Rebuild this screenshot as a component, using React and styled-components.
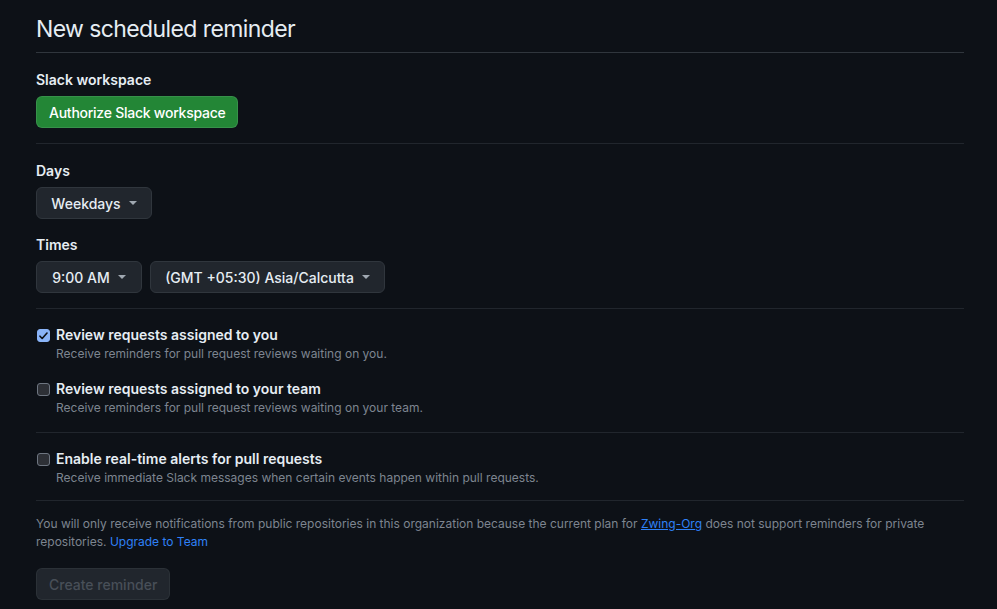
import styled, { createGlobalStyle } from "styled-components";

const GlobalStyle = createGlobalStyle`
  html, body {
    margin: 0;
    padding: 0;
    background: #0d1117;
  }
  body {
    font-family: Inter, "Liberation Sans", sans-serif;
    color: #e6edf3;
  }
`;

const CaretIcon = () => (
  <svg width="8" height="4" viewBox="0 0 8 4" aria-hidden="true">
    <path d="M0 0h8L4 4z" fill="currentColor" />
  </svg>
);

const CheckMark = () => (
  <svg width="9" height="8" viewBox="0 0 9 8" aria-hidden="true">
    <path
      d="M1 4.2l2.2 2.3L8 1"
      fill="none"
      stroke="#0d1117"
      strokeWidth="1.6"
      strokeLinecap="round"
      strokeLinejoin="round"
    />
  </svg>
);

const Option = ({ checked, title, note }) => (
  <OptionRow>
    <Box $checked={checked}>{checked && <CheckMark />}</Box>
    <OptionText>
      <OptionTitle>{title}</OptionTitle>
      <OptionNote>{note}</OptionNote>
    </OptionText>
  </OptionRow>
);

const App = () => {
  return (
    <>
      <GlobalStyle />
      <Page>
        <Header>
          <Title>New scheduled reminder</Title>
        </Header>

        <Section>
          <Label>Slack workspace</Label>
          <PrimaryButton>Authorize Slack workspace</PrimaryButton>
        </Section>

        <Section>
          <Label>Days</Label>
          <SelectRow>
            <Select $width={116}>
              Weekdays <CaretIcon />
            </Select>
          </SelectRow>
          <Label $top={16}>Times</Label>
          <SelectRow>
            <Select $width={106}>
              9:00 AM <CaretIcon />
            </Select>
            <Select $width={235}>
              (GMT +05:30) Asia/Calcutta <CaretIcon />
            </Select>
          </SelectRow>
        </Section>

        <Section $top={16}>
          <Option
            checked
            title="Review requests assigned to you"
            note="Receive reminders for pull request reviews waiting on you."
          />
          <Option
            title="Review requests assigned to your team"
            note="Receive reminders for pull request reviews waiting on your team."
          />
        </Section>

        <Section $top={16} $bottom={13}>
          <Option
            title="Enable real-time alerts for pull requests"
            note="Receive immediate Slack messages when certain events happen within pull requests."
          />
        </Section>

        <Footer>
          <Notice>
            You will only receive notifications from public repositories in this
            organization because the current plan for{" "}
            <OrgLink href="#">Zwing-Org</OrgLink> does not support reminders for
            private repositories. <PlainLink href="#">Upgrade to Team</PlainLink>
          </Notice>
          <DisabledButton disabled>Create reminder</DisabledButton>
        </Footer>
      </Page>
    </>
  );
};

export default App;

//Styled Components
const Page = styled.div`
  width: 928px;
  margin-left: 36px;
`;

const Header = styled.div`
  padding: 14px 0 8px;
  border-bottom: 1px solid #30363d;
`;

const Title = styled.h2`
  margin: 0;
  font-size: 23px;
  line-height: 30px;
  font-weight: 400;
  letter-spacing: -0.6px;
  color: #e6edf3;
`;

const Section = styled.div`
  padding: ${(p) => p.$top || 17}px 0 ${(p) => p.$bottom || 15}px;
  border-bottom: 1px solid #21262d;
  display: flex;
  flex-direction: column;
  align-items: flex-start;
`;

const Label = styled.div`
  font-size: 14px;
  line-height: 20px;
  font-weight: 600;
  margin-top: ${(p) => p.$top || 0}px;
  margin-bottom: 6px;
`;

const PrimaryButton = styled.button`
  height: 32px;
  padding: 0 12px;
  font-family: inherit;
  font-size: 14px;
  font-weight: 500;
  letter-spacing: -0.25px;
  color: #ffffff;
  background: #238636;
  border: 1px solid rgba(240, 246, 252, 0.1);
  border-radius: 6px;
`;

const SelectRow = styled.div`
  display: flex;
  gap: 8px;
`;

const Select = styled.button`
  width: ${(p) => p.$width}px;
  height: 32px;
  display: flex;
  align-items: center;
  justify-content: center;
  gap: 8px;
  font-family: inherit;
  font-size: 14px;
  font-weight: 500;
  color: #e6edf3;
  background: #21262d;
  border: 1px solid #30363d;
  border-radius: 6px;

  svg {
    color: #a0a8b1;
  }
`;

const OptionRow = styled.div`
  display: flex;
  align-items: flex-start;
  gap: 6px;
  & + & {
    margin-top: 16px;
  }
`;

const Box = styled.span`
  box-sizing: border-box;
  width: 13px;
  height: 13px;
  margin: 4px 0 0 1px;
  border-radius: 3px;
  display: flex;
  align-items: center;
  justify-content: center;
  background: ${(p) => (p.$checked ? "#8ab4f8" : "#2d3036")};
  border: 1px solid ${(p) => (p.$checked ? "#8ab4f8" : "#6e7681")};
`;

const OptionText = styled.div`
  display: flex;
  flex-direction: column;
`;

const OptionTitle = styled.div`
  font-size: 14px;
  line-height: 20px;
  font-weight: 600;
`;

const OptionNote = styled.div`
  font-size: 12px;
  line-height: 18px;
  color: #7d8590;
`;

const Footer = styled.div`
  padding-top: 14px;
`;

const Notice = styled.p`
  margin: 0;
  font-size: 12px;
  line-height: 18px;
  color: #7d8590;
`;

const OrgLink = styled.a`
  color: #2f81f7;
  text-decoration: underline;
`;

const PlainLink = styled.a`
  color: #2f81f7;
  text-decoration: none;
`;

const DisabledButton = styled.button`
  display: block;
  margin-top: 17px;
  height: 32px;
  padding: 0 12px;
  font-family: inherit;
  font-size: 14px;
  font-weight: 500;
  color: #484f58;
  background: #21262d;
  border: 1px solid rgba(240, 246, 252, 0.05);
  border-radius: 6px;
`;
